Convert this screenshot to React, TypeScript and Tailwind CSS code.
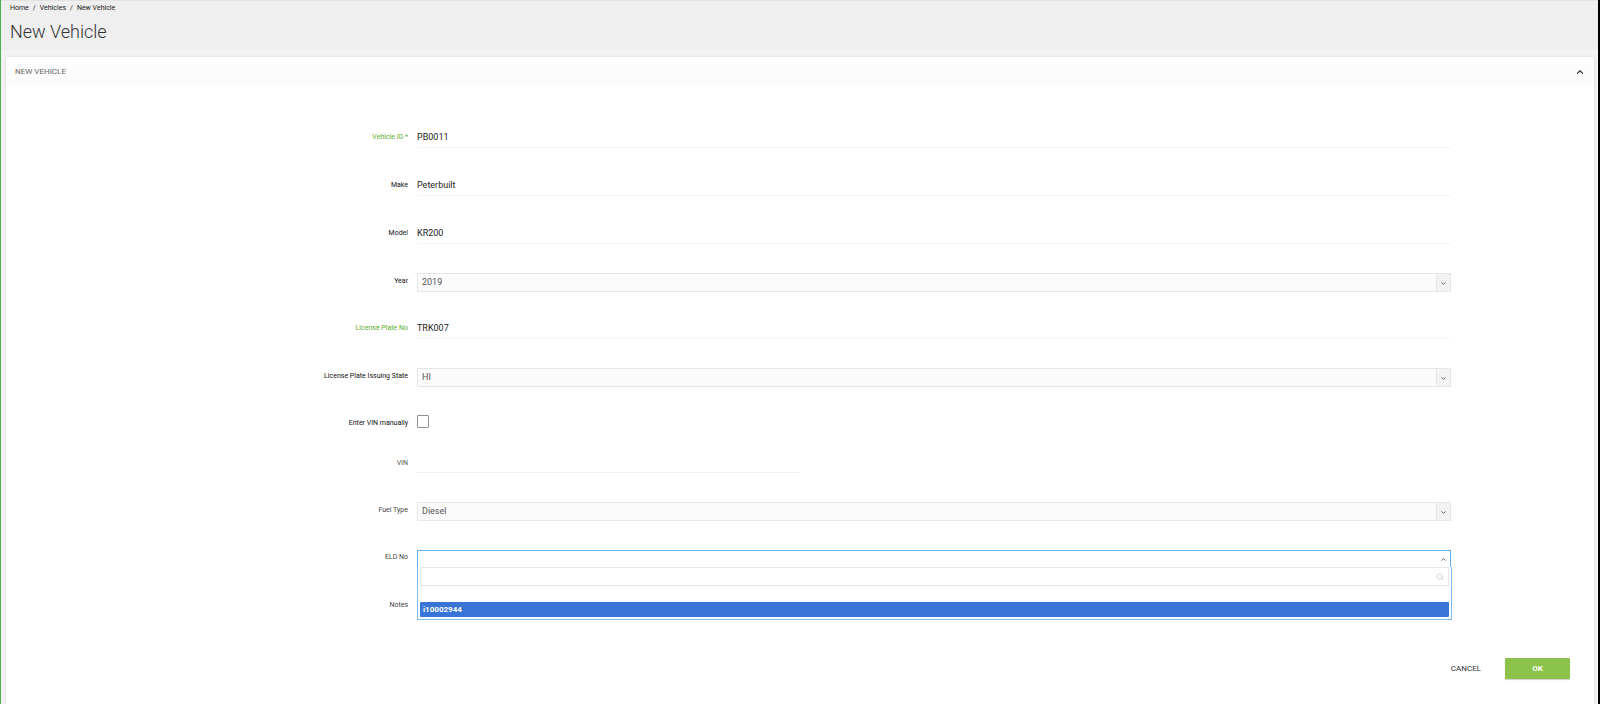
import { useState, type ReactNode } from "react";
import { ChevronDown, ChevronUp, Search } from "lucide-react";

type RowProps = {
  id: string;
  label: string;
  height?: string;
  labelColor?: string;
  children: ReactNode;
};

const Row = ({
  id,
  label,
  height = "h-[48px]",
  labelColor = "text-[#111111]",
  children,
}: RowProps) => (
  <div className={`grid grid-cols-[411fr_1034fr_143fr] items-start ${height}`}>
    <label
      htmlFor={id}
      className={`pt-[9px] pr-[9px] text-right text-[7px] leading-[10px] ${labelColor}`}
    >
      {label}
    </label>
    {children}
  </div>
);

const TextInput = ({ id, value }: { id: string; value: string }) => (
  <input
    id={id}
    type="text"
    defaultValue={value}
    className="h-[25px] w-full border-b border-[#f5f5f5] bg-transparent pt-[3px] text-[9px] text-[#222222] outline-none"
  />
);

const SelectBox = ({ id, options }: { id: string; options: string[] }) => (
  <div className="relative mt-[6px] h-[19px] border border-[#e6e6e6] bg-[#fbfbfb]">
    <select
      id={id}
      className="block h-full w-full appearance-none bg-transparent pr-5 pl-[4px] text-[9px] text-[#555555] outline-none"
    >
      {options.map((o) => (
        <option key={o}>{o}</option>
      ))}
    </select>
    <span className="pointer-events-none absolute inset-y-0 right-0 flex w-[14px] items-center justify-center border-l border-[#e6e6e6] bg-[#f3f3f3] pt-[2px]">
      <ChevronDown className="size-[7px] text-[#555555]" strokeWidth={3} />
    </span>
  </div>
);

export default function App() {
  const [open, setOpen] = useState(true);
  const [eld, setEld] = useState("");

  return (
    <div className="flex min-h-screen flex-col border-r-2 border-l border-r-black border-l-[#4caf50] bg-[#f3f3f3] font-[Roboto,sans-serif]">
      <header className="h-[50px] border-t border-[#e3e3e3] bg-[#efefef] pl-[9px]">
        <nav aria-label="Breadcrumb" className="flex gap-[4px] pt-[2px] text-[7px] leading-[10px] text-[#222222]">
          <a href="#home">Home</a>
          <span>/</span>
          <a href="#vehicles">Vehicles</a>
          <span>/</span>
          <span>New Vehicle</span>
        </nav>
        <h1 className="pt-[7px] text-[18px] leading-[24px] font-light text-[#333333]">New Vehicle</h1>
      </header>

      <main className="mt-[7px] mr-[4px] ml-[5px] flex-1 bg-white shadow-[0_0_3px_rgba(0,0,0,0.12)]">
        <div className="flex h-[29px] items-center justify-between bg-[#fcfcfc] px-[9px]">
          <h2 className="text-[8px] leading-[10px] text-[#666666]">NEW VEHICLE</h2>
          <button type="button" aria-label="Collapse">
            <ChevronUp className="size-[10px] text-[#444444]" strokeWidth={3} />
          </button>
        </div>

        <form className="pt-[37px]" onSubmit={(e) => e.preventDefault()}>
          <Row id="vehicle-id" label="Vehicle ID *" labelColor="text-[#5eae2b]">
            <TextInput id="vehicle-id" value="PB0011" />
          </Row>
          <Row id="make" label="Make">
            <TextInput id="make" value="Peterbuilt" />
          </Row>
          <Row id="model" label="Model">
            <TextInput id="model" value="KR200" />
          </Row>
          <Row id="year" label="Year" height="h-[47px]">
            <SelectBox id="year" options={["2019", "2018", "2017"]} />
          </Row>
          <Row id="plate" label="License Plate No" labelColor="text-[#5eae2b]">
            <TextInput id="plate" value="TRK007" />
          </Row>
          <Row id="state" label="License Plate Issuing State" height="h-[47px]">
            <SelectBox id="state" options={["HI", "ID", "IL"]} />
          </Row>
          <Row id="manual-vin" label="Enter VIN manually" height="h-[40px]">
            <input
              id="manual-vin"
              type="checkbox"
              className="mt-[6px] h-[13px] w-[12px] appearance-none rounded-[1px] border border-[#8f8f8f] bg-white checked:bg-[#8bc34a]"
            />
          </Row>
          <Row id="vin" label="VIN" height="h-[47px]" labelColor="text-[#555555]">
            <input
              id="vin"
              type="text"
              disabled
              className="h-[24px] w-[37%] border-b border-dotted border-[#e3e3e3] bg-transparent text-[9px]"
            />
          </Row>
          <Row id="fuel" label="Fuel Type" height="h-[47px]" labelColor="text-[#444444]">
            <SelectBox id="fuel" options={["Diesel", "Gasoline", "Propane"]} />
          </Row>
          <Row id="eld" label="ELD No" labelColor="text-[#444444]">
            <div className="relative mt-[7px]">
              <button
                id="eld"
                type="button"
                aria-expanded={open}
                onClick={() => setOpen(!open)}
                className="flex h-[18px] w-full items-center justify-between border border-[#64b0ee] bg-white pr-[3px] pl-[4px] text-[9px] text-[#555555]"
              >
                <span>{eld}</span>
                <ChevronUp className="size-[7px] text-[#555555]" strokeWidth={3} />
              </button>
              {open && (
                <div className="absolute top-[17px] -right-px left-0 z-10 border border-t-0 border-[#7db9f2] bg-white px-[2px] pb-[2px]">
                  <div className="flex h-[19px] items-center border border-[#e6e6e6] pr-[4px]">
                    <input
                      type="text"
                      aria-label="Search ELD"
                      className="h-full min-w-0 flex-1 px-1 text-[9px] outline-none"
                    />
                    <Search className="size-[8px] text-[#bbbbbb]" />
                  </div>
                  <ul className="pt-[16px]">
                    <li>
                      <button
                        type="button"
                        onClick={() => {
                          setEld("i10002944");
                          setOpen(false);
                        }}
                        className="block h-[15px] w-full rounded-[1px] bg-[#3875d7] pl-[3px] text-left text-[8px] leading-[14px] font-bold text-white"
                      >
                        i10002944
                      </button>
                    </li>
                  </ul>
                </div>
              )}
            </div>
          </Row>
          <Row id="notes" label="Notes" height="h-[67px]" labelColor="text-[#444444]">
            <textarea
              id="notes"
              rows={1}
              className="mt-[5px] h-[20px] w-full resize-none border-b border-[#f5f5f5] text-[9px] outline-none"
            />
          </Row>

          <div className="flex items-center justify-end gap-[24px] pr-[24px]">
            <button type="button" className="h-[21px] text-[8px] text-[#333333]">
              CANCEL
            </button>
            <button
              type="submit"
              className="h-[21px] w-[65px] rounded-[1px] bg-[#8bc34a] text-[8px] font-bold text-white shadow-[0_1px_1px_rgba(0,0,0,0.2)]"
            >
              OK
            </button>
          </div>
        </form>
      </main>
    </div>
  );
}
